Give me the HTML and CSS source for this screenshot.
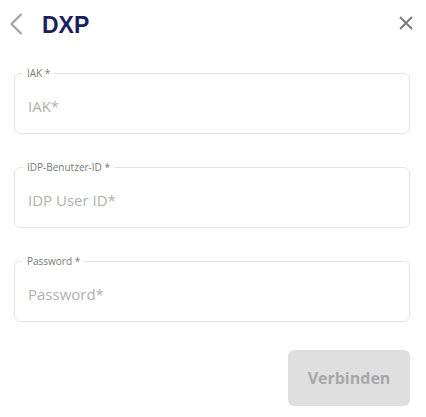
FILE: index.html
```html
<!DOCTYPE html>
<html lang="de">
<head>
    <meta charset="UTF-8">
    <meta name="viewport" content="width=device-width, initial-scale=1.0">
    <title>DXP</title>
    <link rel="stylesheet" href="styles.css">
</head>
<body>
    <header class="topbar">
        <button class="icon-btn back" aria-label="Zurück">
            <svg width="14" height="22" viewBox="0 0 14 22"><path d="M12.5 1 L2.5 11 L12.5 21" fill="none" stroke="#a3a3a3" stroke-width="2.2"/></svg>
        </button>
        <h1 class="title">DXP</h1>
        <button class="icon-btn close" aria-label="Schließen">
            <svg width="14" height="14" viewBox="0 0 14 14"><path d="M1 1 L13 13 M13 1 L1 13" fill="none" stroke="#777" stroke-width="1.8"/></svg>
        </button>
    </header>

    <form class="login">
        <fieldset class="field">
            <legend>IAK *</legend>
            <input type="text" placeholder="IAK*">
        </fieldset>
        <fieldset class="field">
            <legend>IDP-Benutzer-ID *</legend>
            <input type="text" placeholder="IDP User ID*">
        </fieldset>
        <fieldset class="field">
            <legend>Password *</legend>
            <input type="password" placeholder="Password*">
        </fieldset>
        <div class="actions">
            <button type="submit" class="connect" disabled>Verbinden</button>
        </div>
    </form>
</body>
</html>
```

FILE: styles.css
```css
body {
    margin: 0;
    font-family: "Open Sans", sans-serif;
    background: #fff;
}

.topbar {
    display: flex;
    align-items: center;
    height: 50px;
    padding: 0 13px 0 9px;
}

.icon-btn {
    background: none;
    border: 0;
    padding: 0;
    display: flex;
    cursor: pointer;
}

.back {
    margin-top: -2px;
}

.close {
    margin-left: auto;
    margin-top: -5px;
}

.title {
    margin: 0 0 0 19px;
    font-family: "Liberation Sans", Arial, sans-serif;
    font-size: 23px;
    font-weight: 700;
    color: #1c1f5c;
}

.login {
    display: flex;
    flex-direction: column;
    gap: 27px;
    padding: 17px 16px 0 14px;
}

.field {
    margin: 0;
    padding: 0 8px;
    border: 1px solid #e5e5e5;
    border-radius: 6px;
    min-width: 0;
}

.field legend {
    padding: 0 4px;
    font-size: 10px;
    line-height: 12px;
    color: #777;
}

.field input {
    display: block;
    width: 100%;
    box-sizing: border-box;
    height: 54px;
    border: 0;
    outline: none;
    padding: 0 0 0 5px;
    font-family: "Open Sans", sans-serif;
    font-size: 15px;
    color: #333;
    background: transparent;
}

.field input::placeholder {
    color: #b0b0b0;
}

.actions {
    display: flex;
    justify-content: flex-end;
    margin-top: 1px;
}

.connect {
    width: 122px;
    height: 56px;
    border: 0;
    border-radius: 6px;
    background: #dfdfdf;
    color: #a8a8a8;
    font-family: "Open Sans", sans-serif;
    font-size: 16px;
    font-weight: 700;
}
```
